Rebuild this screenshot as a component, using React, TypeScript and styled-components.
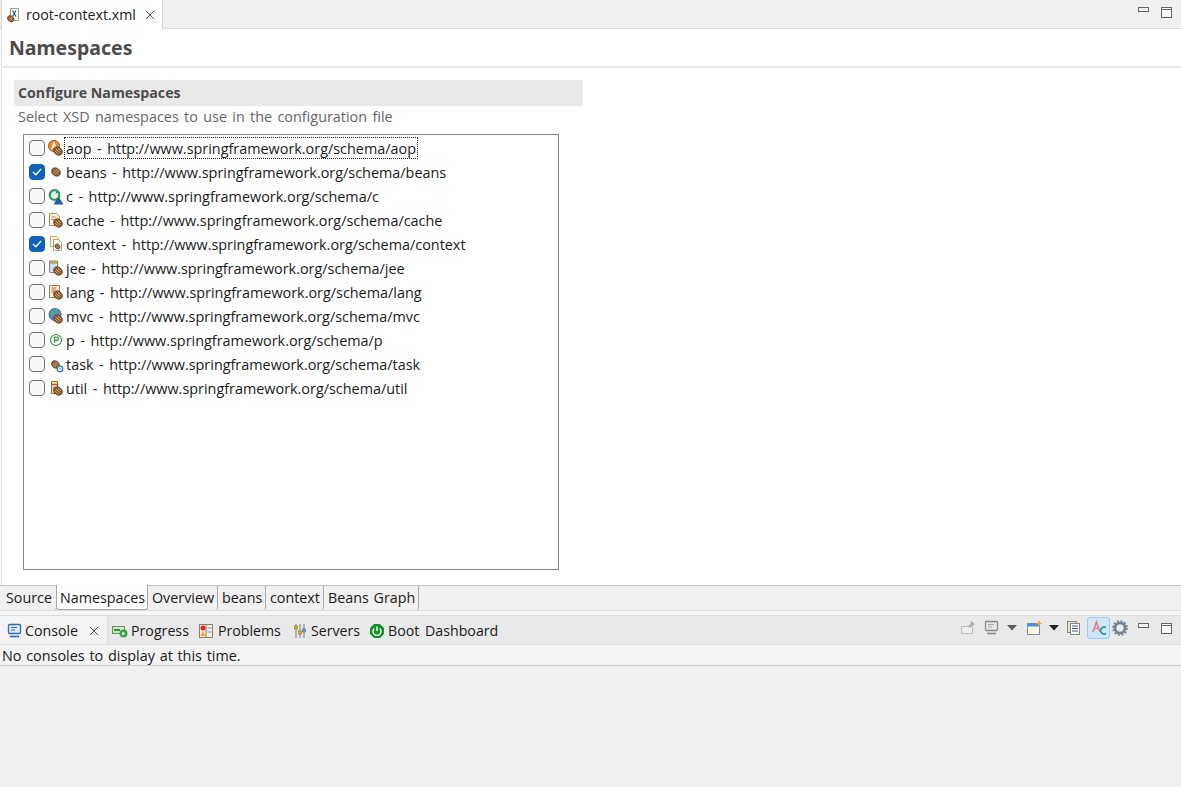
import React from "react";
import styled, { createGlobalStyle } from "styled-components";

const Global = createGlobalStyle`
  html, body { margin: 0; padding: 0; background: #fff; }
  body { font-family: "Open Sans", "Noto Sans", "Liberation Sans", sans-serif; color: #1a1a1a; }
  * { box-sizing: border-box; }
`;

const Page = styled.div`
  width: 1181px;
  height: 787px;
  display: flex;
  flex-direction: column;
  overflow: hidden;
  background: #fff;
`;

const EditorTabBar = styled.div`
  height: 29px;
  display: flex;
  justify-content: space-between;
  align-items: stretch;
  background: #f0f0f0;
  border-bottom: 1px solid #d9d9d9;
`;

const EditorTab = styled.div`
  width: 162px;
  margin-left: 1px;
  margin-bottom: -1px;
  display: flex;
  align-items: center;
  padding-left: 5px;
  gap: 3px;
  background: #fff;
  border-left: 1px solid #d4d4d4;
  border-right: 1px solid #d4d4d4;
  font-size: 14.2px;
`;

const TabClose = styled.svg<{ $offset: number }>`
  width: 10px;
  height: 10px;
  margin-left: ${(p) => p.$offset}px;
  flex: none;
`;

const ViewButtons = styled.div`
  display: flex;
  align-items: flex-start;
  gap: 11px;
  padding: 7px 8px 0 0;
`;

const Editor = styled.div`
  flex: 1;
  min-height: 0;
  display: flex;
  flex-direction: column;
  margin-left: 1px;
  border-left: 1px solid #dedede;
`;

const FormHeader = styled.h1`
  margin: 0;
  height: 39px;
  padding: 6px 0 0 7px;
  font-size: 19.5px;
  line-height: 26px;
  font-weight: 700;
  color: #4b4b4b;
  border-bottom: 2px solid #e8e8e8;
  font-family: "Noto Sans", "Open Sans", sans-serif;
`;

const Section = styled.section`
  width: 569px;
  margin: 12px 0 0 12px;
`;

const SectionTitle = styled.h2`
  margin: 0;
  height: 26px;
  padding-left: 4px;
  background: #e9e9e9;
  font-size: 14.2px;
  line-height: 25px;
  font-weight: 700;
  color: #4c4c4c;
`;

const SectionHint = styled.p`
  margin: 0;
  height: 28px;
  padding-left: 4px;
  font-size: 14.4px;
  line-height: 22px;
  word-spacing: 1.6px;
  color: #666;
`;

const NamespaceList = styled.ul`
  list-style: none;
  margin: 0 0 0 9px;
  padding: 2px 0 0 0;
  width: 536px;
  height: 436px;
  border: 1px solid #858585;
  background: #fff;
`;

const NamespaceRow = styled.li`
  height: 24px;
  display: flex;
  align-items: center;
  padding-left: 5px;
  font-size: 14.4px;
  word-spacing: 1.8px;
  white-space: nowrap;
`;

const Check = styled.span<{ $on?: boolean }>`
  width: 16px;
  height: 16px;
  flex: none;
  margin-bottom: 2px;
  border-radius: 4px;
  border: 1px solid ${(p) => (p.$on ? "#0f62b5" : "#767676")};
  background: ${(p) => (p.$on ? "#0f62b5" : "#f8f8f8")};
  display: flex;
  align-items: center;
  justify-content: center;
`;

const IconSlot = styled.span`
  width: 16px;
  height: 16px;
  flex: none;
  margin: 0 2px 2px;
  display: flex;
`;

const RowLabel = styled.span<{ $focused?: boolean }>`
  height: 20px;
  margin-bottom: 2px;
  line-height: 22px;
  padding: 0 1px;
  outline: ${(p) => (p.$focused ? "1px dotted #222" : "none")};
`;

const PageTabBar = styled.div`
  height: 26px;
  display: flex;
  background: #f0f0f0;
  border-top: 1px solid #c4c4c4;
  border-bottom: 1px solid #dcdcdc;
  padding-left: 2px;
`;

const PageTab = styled.div<{ $active?: boolean; $w: number }>`
  width: ${(p) => p.$w}px;
  height: ${(p) => (p.$active ? "25px" : "24px")};
  padding-left: ${(p) => (p.$active ? "3px" : "4px")};
  margin-top: ${(p) => (p.$active ? "-1px" : "0")};
  margin-left: ${(p) => (p.$active ? "-1px" : "0")};
  font-size: 14.3px;
  line-height: ${(p) => (p.$active ? "25px" : "23px")};
  white-space: nowrap;
  word-spacing: 1px;
  background: ${(p) => (p.$active ? "#fff" : "#f0f0f0")};
  border-right: 1px solid #a8a8a8;
  border-left: ${(p) => (p.$active ? "1px solid #a8a8a8" : "none")};
  border-bottom: ${(p) => (p.$active ? "1px solid #a8a8a8" : "none")};
  border-radius: 0 0 3px 3px;
`;

const Gap = styled.div`
  height: 4px;
  background: #f5f5f5;
`;

const ConsoleBar = styled.div`
  height: 30px;
  display: flex;
  align-items: stretch;
  justify-content: space-between;
  background: #e9e9e9;
  border-top: 1px solid #dcdcdc;
  border-bottom: 1px solid #e0e0e0;
`;

const ViewTabs = styled.div`
  display: flex;
  align-items: stretch;
`;

const ViewTab = styled.div<{ $active?: boolean; $gap?: number; $mr?: number }>`
  display: flex;
  align-items: center;
  gap: ${(p) => p.$gap ?? 3}px;
  padding: 1px ${(p) => (p.$active ? "8px" : "5px")} 0 ${(p) => (p.$active ? "7px" : "4px")};
  margin-right: ${(p) => p.$mr ?? 0}px;
  font-size: 14.2px;
  word-spacing: 2px;
  background: ${(p) => (p.$active ? "#f3f3f3" : "transparent")};
  border-right: ${(p) => (p.$active ? "1px solid #dcdcdc" : "none")};
`;

const ViewTools = styled.div`
  display: flex;
  align-items: center;
  padding: 0 6px 4px 0;
`;

const Tool = styled.span<{ $gap?: number; $on?: boolean; $win?: boolean }>`
  width: ${(p) => (p.$on ? "23px" : "16px")};
  height: ${(p) => (p.$on ? "22px" : "16px")};
  margin-left: ${(p) => p.$gap ?? 0}px;
  display: flex;
  align-items: ${(p) => (p.$win ? "flex-start" : "center")};
  justify-content: center;
  padding-top: ${(p) => (p.$win ? "3px" : "0")};
  border-radius: 3px;
  background: ${(p) => (p.$on ? "#cfe6fb" : "transparent")};
  border: ${(p) => (p.$on ? "1px solid #99cdf7" : "none")};
`;

const ConsoleMessage = styled.div`
  height: 21px;
  padding-left: 2px;
  font-size: 14.4px;
  line-height: 21px;
  word-spacing: 1px;
  background: #f3f3f3;
  border-bottom: 1px solid #c8c8c8;
`;

const ConsoleBody = styled.div`
  flex: none;
  height: 121px;
  background: #f0f0f0;
`;

const Bean = ({ x = 0, y = 0, s = 1 }: { x?: number; y?: number; s?: number }) => (
  <g transform={`translate(${x} ${y}) scale(${s})`}>
    <ellipse cx="5" cy="5" rx="4.8" ry="3.9" transform="rotate(40 5 5)" fill="#7f5226" stroke="#6b4522" strokeWidth="0.6" />
    <path d="M2.6 3 L7.6 7 M2.2 5.200 L5.400 7.800 M4.800 2.200 L8 4.800" stroke="#e2c49a" strokeWidth="0.9" />
  </g>
);

const Svg = ({ children, w = 16, h = 16 }: { children: React.ReactNode; w?: number; h?: number }) => (
  <svg width={w} height={h} viewBox={`0 0 ${w} ${h}`} style={{ overflow: "visible" }}>
    {children}
  </svg>
);

const icons: Record<string, React.ReactNode> = {
  aop: (
    <Svg>
      <circle cx="7" cy="6" r="5.6" fill="#e68a32" stroke="#b9641c" />
      <path d="M4.500 9.200 7 2.800l2.500 6.400M5.400 7h3.200" stroke="#fff" strokeWidth="1.200" fill="none" />
      <Bean x={6} y={6} />
    </Svg>
  ),
  beans: (
    <Svg>
      <Bean x={4} y={3} />
    </Svg>
  ),
  c: (
    <Svg>
      <circle cx="7.500" cy="7" r="4.800" fill="#e3f3e8" stroke="#2f9a5e" strokeWidth="2.200" />
      <path d="M10 1.500l2.500 3.500-4 .5z" fill="#2f9a5e" />
      <path d="M6.500 16.500l5-8 5 8z" fill="#1f62a8" />
    </Svg>
  ),
  cache: (
    <Svg>
      <path d="M2.500 1.500h7l3 3v9h-10z" fill="#fbf4dc" stroke="#a8905c" />
      <path d="M4.500 5h4M4.500 7.500h3" stroke="#d06a50" />
      <Bean x={6} y={6} />
    </Svg>
  ),
  context: (
    <Svg>
      <path d="M3.500 0.500h6l2 2v8h-8z" fill="#fbf1cf" stroke="#c4ad72" />
      <path d="M6.500 3.500h5l3 3v8h-8z" fill="#f8f8f4" stroke="#a8a48c" />
      <Bean x={7.500} y={7.500} s={0.6} />
    </Svg>
  ),
  jee: (
    <Svg>
      <path d="M2.500 2.500h8v10h-8z" fill="#cfe0f2" stroke="#8a8a78" />
      <path d="M2.500 1h8v2h-8z" fill="#e8c868" stroke="#9a8448" />
      <Bean x={6} y={6} />
    </Svg>
  ),
  lang: (
    <Svg>
      <path d="M2.500 1.500h10v12h-10z" fill="#f6efd6" stroke="#93834f" />
      <path d="M4.500 4h5M4.500 6h4M4.500 8h3" stroke="#d0604a" />
      <Bean x={6} y={6} />
    </Svg>
  ),
  mvc: (
    <Svg>
      <circle cx="8" cy="6.500" r="6" fill="#4a90d6" stroke="#3a6ea5" />
      <path d="M4 3.500c2-1 3 0 3 1.500S5 7 4 6.500zM8 9c1.500-1 3-1 2.500 1.500L8.500 12z" fill="#6ea84a" />
      <path d="M8 1.500c2 0 3 1 3 2.500S9 5 8.500 3.500z" fill="#6ea84a" />
      <Bean x={6} y={6} />
    </Svg>
  ),
  p: (
    <Svg>
      <circle cx="9" cy="8" r="5.500" fill="#fff" stroke="#2f8a3a" strokeWidth="1.100" />
      <path d="M7.500 11v-6h2.200a1.700 1.700 0 0 1 0 3.400H7.500" fill="none" stroke="#2f8a3a" strokeWidth="1.200" />
    </Svg>
  ),
  task: (
    <Svg>
      <Bean x={4} y={4} s={0.9} />
      <circle cx="13" cy="13" r="2.800" fill="#fff" stroke="#2a7fd0" strokeWidth="1.300" />
      <path d="M13 11.800v1.400h1.200" stroke="#2a7fd0" fill="none" strokeWidth="0.800" />
    </Svg>
  ),
  util: (
    <Svg>
      <path d="M4.500 1.500h6v12h-6z" fill="#f3dc9c" stroke="#8a6f35" />
      <path d="M4.500 4.500h6" stroke="#c84a3a" strokeWidth="1.500" />
      <path d="M6 7.500h3M6 9.500h3" stroke="#4a7fb0" />
      <Bean x={6} y={6} />
    </Svg>
  ),
};

const namespaces = [
  { id: "aop", focused: true },
  { id: "beans", on: true },
  { id: "c" },
  { id: "cache" },
  { id: "context", on: true },
  { id: "jee" },
  { id: "lang" },
  { id: "mvc" },
  { id: "p" },
  { id: "task" },
  { id: "util" },
];

const pageTabs = [
  { label: "Source", w: 55 },
  { label: "Namespaces", w: 92, active: true },
  { label: "Overview", w: 70 },
  { label: "beans", w: 48 },
  { label: "context", w: 58 },
  { label: "Beans Graph", w: 95 },
];

const Minimize = () => (
  <svg width="12" height="6" viewBox="0 0 12 6">
    <rect x="0.500" y="0.500" width="10" height="4" fill="#f4f4f4" stroke="#666" />
  </svg>
);

const Maximize = () => (
  <svg width="12" height="11" viewBox="0 0 12 11">
    <rect x="0.500" y="0.500" width="10" height="10" fill="#fafafa" stroke="#666" />
    <path d="M0.500 2.500h10" stroke="#666" />
  </svg>
);

const Cross = ({ offset }: { offset: number }) => (
  <TabClose $offset={offset} viewBox="0 0 10 10">
    <path d="M1 1l8 8M9 1l-8 8" stroke="#555" strokeWidth="1" />
  </TabClose>
);

const Caret = ({ dark }: { dark?: boolean }) => (
  <svg width="10" height="6" viewBox="0 0 10 6">
    <path d="M0 0h10L5 5.500z" fill={dark ? "#222" : "#5c5c5c"} />
  </svg>
);

export default function App() {
  return (
    <Page>
      <Global />
      <EditorTabBar>
        <EditorTab>
          <Svg>
            <path d="M3.500 1.500h8v12h-8z" fill="#fbfbf6" stroke="#a99b72" />
            <path d="M5.500 3.500l3.500 6M9 3.500l-3.500 6" stroke="#2f5f9a" strokeWidth="1.300" />
            <Bean x={0} y={8} s={0.75} />
          </Svg>
          root-context.xml
          <Cross offset={6} />
        </EditorTab>
        <ViewButtons>
          <Minimize />
          <Maximize />
        </ViewButtons>
      </EditorTabBar>
      <Editor>
        <FormHeader>Namespaces</FormHeader>
        <Section>
          <SectionTitle>Configure Namespaces</SectionTitle>
          <SectionHint>Select XSD namespaces to use in the configuration file</SectionHint>
          <NamespaceList>
            {namespaces.map((n) => (
              <NamespaceRow key={n.id}>
                <Check $on={n.on}>
                  {n.on && (
                    <svg width="10" height="8" viewBox="0 0 10 8">
                      <path d="M1 4l2.800 2.800L9 1" fill="none" stroke="#fff" strokeWidth="1.300" />
                    </svg>
                  )}
                </Check>
                <IconSlot>{icons[n.id]}</IconSlot>
                <RowLabel $focused={n.focused}>
                  {n.id} - http://www.springframework.org/schema/{n.id}
                </RowLabel>
              </NamespaceRow>
            ))}
          </NamespaceList>
        </Section>
      </Editor>
      <PageTabBar>
        {pageTabs.map((t) => (
          <PageTab key={t.label} $w={t.w} $active={t.active}>
            {t.label}
          </PageTab>
        ))}
      </PageTabBar>
      <Gap />
      <ConsoleBar>
        <ViewTabs>
          <ViewTab $active $gap={2}>
            <Svg>
              <rect x="1.500" y="1.500" width="12" height="9" rx="1" fill="#dfeaf6" stroke="#2f6fb0" strokeWidth="1.300" />
              <path d="M4 4.500h6M4 7h4" stroke="#2f6fb0" />
              <path d="M3 13.500h9" stroke="#2f6fb0" strokeWidth="1.600" />
            </Svg>
            Console
            <Cross offset={9} />
          </ViewTab>
          <ViewTab>
            <Svg>
              <rect x="0.500" y="3.500" width="12" height="7" fill="#cfe8c4" stroke="#5f9a55" />
              <path d="M2 7h6" stroke="#4a8a40" strokeWidth="2" />
              <circle cx="11.500" cy="10.500" r="4" fill="#3fa24a" />
              <path d="M10.300 8.500l3 2-3 2z" fill="#fff" />
            </Svg>
            Progress
          </ViewTab>
          <ViewTab $gap={4} $mr={2}>
            <Svg>
              <rect x="1.500" y="1.500" width="13" height="13" fill="#f4efe2" stroke="#8f7f68" />
              <path d="M8 1.500v13" stroke="#8f7f68" />
              <circle cx="5" cy="5" r="2.500" fill="#d8242c" />
              <path d="M2.500 13l2.500-5 2.500 5z" fill="#f0a92e" />
              <path d="M9.500 5h4M9.500 9h4" stroke="#6a90c4" />
            </Svg>
            Problems
          </ViewTab>
          <ViewTab>
            <Svg>
              <path d="M4 1v14M8 1v14M12 1v14" stroke="#7a7a7a" />
              <rect x="2.500" y="3" width="3" height="3" fill="#e8b92e" stroke="#8a6a10" strokeWidth="0.600" />
              <rect x="6.500" y="8" width="3" height="3" fill="#e8b92e" stroke="#8a6a10" strokeWidth="0.600" />
              <rect x="10.500" y="6" width="3" height="3" fill="#6aa6dc" stroke="#2f6fa8" strokeWidth="0.600" />
            </Svg>
            Servers
          </ViewTab>
          <ViewTab>
            <Svg>
              <path d="M5 1h6l4 4v6l-4 4H5l-4-4V5z" fill="#14902a" />
              <path d="M5.200 5.500a4 4 0 1 0 5.600 0" fill="none" stroke="#fff" strokeWidth="1.400" />
              <path d="M8 3.500v4.500" stroke="#fff" strokeWidth="1.400" />
            </Svg>
            Boot Dashboard
          </ViewTab>
        </ViewTabs>
        <ViewTools>
          <Tool>
            <Svg>
              <rect x="1.500" y="6.500" width="11" height="7" fill="#eee" stroke="#bdbdbd" />
              <path d="M9 7l4-4M11 2l3 3" stroke="#a8a8a8" strokeWidth="1.800" />
            </Svg>
          </Tool>
          <Tool $gap={8}>
            <Svg>
              <rect x="1.500" y="1.500" width="12" height="9" rx="1" fill="#e6e6e6" stroke="#8c8c8c" strokeWidth="1.300" />
              <path d="M4 4.500h6M4 7h4" stroke="#a5a5a5" />
              <path d="M3 13.500h9" stroke="#8c8c8c" strokeWidth="1.600" />
            </Svg>
          </Tool>
          <Tool $gap={4}>
            <Caret />
          </Tool>
          <Tool $gap={6}>
            <Svg>
              <rect x="1.500" y="3.500" width="12" height="11" fill="#fbf6e2" stroke="#7d8ea3" />
              <path d="M1.500 3.500h12v3h-12z" fill="#4a90d6" />
              <path d="M13 1v5M10.500 3.500h5" stroke="#e0a92e" strokeWidth="1.500" />
            </Svg>
          </Tool>
          <Tool $gap={4}>
            <Caret dark />
          </Tool>
          <Tool $gap={4}>
            <Svg>
              <rect x="1.500" y="1.500" width="9" height="11" fill="#e8dfc6" stroke="#7f8a7a" />
              <rect x="4.500" y="3.500" width="9" height="11" fill="#fff" stroke="#7f8a7a" />
              <path d="M6 6h6M6 8.500h6M6 11h6" stroke="#2f4f9a" />
            </Svg>
          </Tool>
          <Tool $on $gap={5}>
            <Svg>
              <path d="M2 12l3.500-10L9 12M3.400 8.500h4.500" fill="none" stroke="#ea7f80" strokeWidth="1.700" />
              <path d="M15 7.500a3.500 3.500 0 1 0 0 6" fill="none" stroke="#2f9a94" strokeWidth="1.700" />
            </Svg>
          </Tool>
          <Tool $gap={2}>
            <Svg>
              <circle cx="8" cy="8" r="5" fill="none" stroke="#6f7f8f" strokeWidth="2.600" />
              <circle cx="8" cy="8" r="7" fill="none" stroke="#6f7f8f" strokeWidth="1.600" strokeDasharray="2 1.700" />
              <circle cx="8" cy="8" r="2" fill="#e8eef4" />
            </Svg>
          </Tool>
          <Tool $gap={8} $win>
            <Minimize />
          </Tool>
          <Tool $gap={7} $win>
            <Maximize />
          </Tool>
        </ViewTools>
      </ConsoleBar>
      <ConsoleMessage>No consoles to display at this time.</ConsoleMessage>
      <ConsoleBody />
    </Page>
  );
}
